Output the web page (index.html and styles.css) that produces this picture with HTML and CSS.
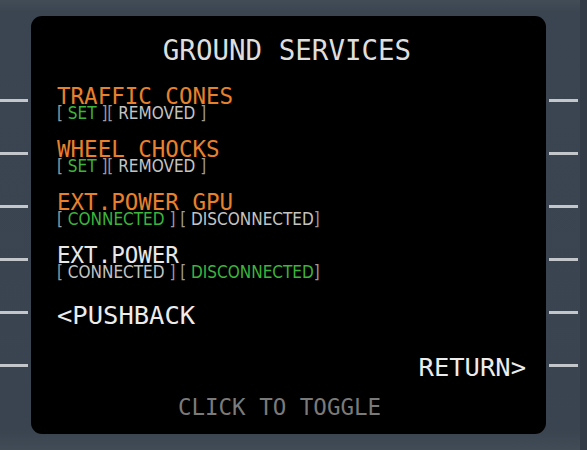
FILE: index.html
```html
<!DOCTYPE html>
<html>
<head>
<meta charset="utf-8">
<link rel="stylesheet" href="styles.css">
</head>
<body>
<div class="frame">
  <div class="ticks ticks-left">
    <span class="tick"></span><span class="tick"></span><span class="tick"></span>
    <span class="tick"></span><span class="tick"></span><span class="tick"></span>
  </div>
  <div class="screen">
    <div class="title">GROUND SERVICES</div>
    <div class="row first">
      <div class="head orange">TRAFFIC CONES</div>
      <div class="sub"><span class="br">[ </span><span class="on">SET</span><span class="br"> ][ </span><span class="off">REMOVED</span><span class="br"> ]</span></div>
    </div>
    <div class="row">
      <div class="head orange">WHEEL CHOCKS</div>
      <div class="sub"><span class="br">[ </span><span class="on">SET</span><span class="br"> ][ </span><span class="off">REMOVED</span><span class="br"> ]</span></div>
    </div>
    <div class="row">
      <div class="head orange">EXT.POWER GPU</div>
      <div class="sub"><span class="br">[ </span><span class="on">CONNECTED</span><span class="br"> ] [ </span><span class="off">DISCONNECTED</span><span class="br">]</span></div>
    </div>
    <div class="row">
      <div class="head white">EXT.POWER</div>
      <div class="sub"><span class="br">[ </span><span class="off">CONNECTED</span><span class="br"> ] [ </span><span class="on">DISCONNECTED</span><span class="br">]</span></div>
    </div>
    <div class="nav left">&lt;PUSHBACK</div>
    <div class="nav right">RETURN&gt;</div>
    <div class="hint">CLICK TO TOGGLE</div>
  </div>
  <div class="ticks ticks-right">
    <span class="tick"></span><span class="tick"></span><span class="tick"></span>
    <span class="tick"></span><span class="tick"></span><span class="tick"></span>
  </div>
</div>
</body>
</html>
```
FILE: styles.css
```css
html, body {
  margin: 0;
  padding: 0;
}
body {
  width: 587px;
  height: 450px;
  overflow: hidden;
  background: #3b4551;
}
.frame {
  display: flex;
  height: 450px;
  background: linear-gradient(to bottom, #434d58 0px, #3b4551 12px, #3a4450 430px, #424c57 450px);
  box-shadow: inset -7px 0 0 #333c46;
}
.ticks {
  display: flex;
  flex-direction: column;
  gap: 50px;
  padding-top: 99px;
  box-sizing: border-box;
}
.ticks-left {
  width: 31px;
}
.ticks-right {
  width: 41px;
  padding-left: 3px;
}
.tick {
  display: block;
  height: 3px;
  background: #c3c7cb;
}
.ticks-left .tick { width: 28px; }
.ticks-right .tick { width: 29px; }

.screen {
  margin-top: 16px;
  width: 515px;
  height: 418px;
  background: #000;
  border-radius: 11px;
  padding: 20px 20px 0 26px;
  box-sizing: border-box;
  display: flex;
  flex-direction: column;
  font-family: "DejaVu Sans Mono", "Liberation Mono", monospace;
}
.title {
  font-size: 27.5px;
  line-height: 28px;
  color: #dedede;
  text-align: center;
  padding-right: 9px;
}
.row {
  margin-top: 19px;
}
.row.first {
  margin-top: 22px;
}
.head {
  font-size: 22.5px;
  line-height: 20px;
  white-space: nowrap;
}
.orange { color: #e8802c; }
.white { color: #e8e8e8; }
.sub {
  font-family: "Liberation Sans Narrow", "DejaVu Sans Condensed", "Liberation Sans", sans-serif;
  font-size: 17px;
  line-height: 14px;
  white-space: nowrap;
}
.br { color: #9a9a9a; }
.on { color: #3cb43c; }
.off { color: #c4c4c4; }
.nav {
  font-size: 25.5px;
  line-height: 26px;
  color: #ececec;
}
.nav.left { margin-top: 23px; }
.nav.right { margin-top: 26px; text-align: right; }
.hint {
  margin-top: 17px;
  font-size: 22.5px;
  line-height: 20px;
  color: #7a7a7a;
  text-align: center;
  padding-right: 24px;
}
```
